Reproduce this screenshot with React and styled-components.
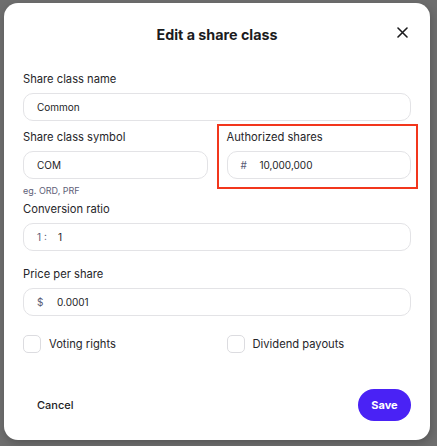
import React from 'react'
import styled, { createGlobalStyle } from 'styled-components'

const Global = createGlobalStyle`
  html, body {
    margin: 0;
    padding: 0;
    background: #6e6e6e;
    font-family: Inter, "Noto Sans", sans-serif;
    color: #1d1d1f;
  }
  * { box-sizing: border-box; }
`

const Backdrop = styled.div`
  width: 437px;
  height: 446px;
  padding: 3px 7px 6px 4px;
  background: #6e6e6e;
`

const Modal = styled.div`
  width: 426px;
  height: 437px;
  background: #fff;
  border-radius: 14px;
  padding: 0 19px;
  display: flex;
  flex-direction: column;
  box-shadow: 1px 3px 8px rgba(0, 0, 0, 0.22);
`

const Header = styled.div`
  height: 58px;
  padding-top: 4px;
  display: flex;
  align-items: center;
  justify-content: center;
  position: relative;
`

const Title = styled.h2`
  margin: 0;
  font-size: 14.3px;
  font-weight: 700;
  color: #1b1b1d;
`

const Close = styled.button`
  position: absolute;
  right: 1px;
  top: 21px;
  width: 16px;
  height: 16px;
  padding: 0;
  border: 0;
  background: none;
  display: flex;
  align-items: center;
  justify-content: center;
`

const Field = styled.div`
  margin-top: ${p => p.$top || 0}px;
  position: relative;
`

const Label = styled.div`
  font-size: 11.2px;
  line-height: 16px;
  height: 16px;
  color: #26262a;
  margin-bottom: 6px;
`

const InputBox = styled.div`
  height: 28px;
  border: 1px solid #e3e3e6;
  border-radius: 10px;
  display: flex;
  align-items: center;
  padding-left: 13px;
  font-size: 10px;
  color: #1d1d1f;
`

const Prefix = styled.span`
  color: #5a5c76;
  width: ${p => p.$w}px;
  flex: none;
`

const Hint = styled.div`
  font-size: 9px;
  line-height: 12px;
  color: #5e6078;
  margin-top: 6px;
`

const Row = styled.div`
  display: grid;
  grid-template-columns: 1fr 1fr;
  align-items: start;
  column-gap: 19px;
  margin-top: ${p => p.$top || 0}px;
`

const Highlight = styled.div`
  position: absolute;
  left: -10px;
  right: -7px;
  top: -5px;
  bottom: -10px;
  border: 2px solid #f2361c;
  pointer-events: none;
`

const CheckItem = styled.label`
  display: flex;
  align-items: center;
  gap: 8px;
  font-size: 11.2px;
  color: #26262a;
`

const Box = styled.span`
  width: 18px;
  height: 18px;
  border: 1px solid #dcdce0;
  border-radius: 5px;
  flex: none;
`

const Footer = styled.div`
  margin-top: auto;
  margin-bottom: 19px;
  display: flex;
  justify-content: space-between;
  align-items: center;
`

const CancelButton = styled.button`
  border: 0;
  background: none;
  padding: 0 0 0 14px;
  font-family: inherit;
  font-size: 11px;
  font-weight: 500;
  color: #1d1d1f;
`

const SaveButton = styled.button`
  border: 0;
  background: #4a22f5;
  color: #fff;
  font-family: inherit;
  font-size: 11px;
  font-weight: 700;
  width: 53px;
  height: 32px;
  border-radius: 16px;
`

export default function App() {
  return (
    <>
      <Global />
      <Backdrop>
        <Modal>
          <Header>
            <Title>Edit a share class</Title>
            <Close aria-label="Close">
              <svg width="11" height="11" viewBox="0 0 11 11">
                <path d="M1 1L10 10M10 1L1 10" stroke="#1b1b1d" strokeWidth="1.6" strokeLinecap="round" />
              </svg>
            </Close>
          </Header>

          <Field $top={10}>
            <Label>Share class name</Label>
            <InputBox>Common</InputBox>
          </Field>

          <Row $top={8}>
            <Field>
              <Label>Share class symbol</Label>
              <InputBox>COM</InputBox>
              <Hint>eg. ORD, PRF</Hint>
            </Field>
            <Field>
              <Highlight />
              <Label>Authorized shares</Label>
              <InputBox>
                <Prefix $w={19}>#</Prefix>
                10,000,000
              </InputBox>
            </Field>
          </Row>

          <Field $top={4}>
            <Label>Conversion ratio</Label>
            <InputBox>
              <Prefix $w={21}>1 :</Prefix>
              1
            </InputBox>
          </Field>

          <Field $top={15}>
            <Label>Price per share</Label>
            <InputBox>
              <Prefix $w={20}>$</Prefix>
              0.0001
            </InputBox>
          </Field>

          <Row $top={19}>
            <CheckItem>
              <Box />
              Voting rights
            </CheckItem>
            <CheckItem>
              <Box />
              Dividend payouts
            </CheckItem>
          </Row>

          <Footer>
            <CancelButton>Cancel</CancelButton>
            <SaveButton>Save</SaveButton>
          </Footer>
        </Modal>
      </Backdrop>
    </>
  )
}
